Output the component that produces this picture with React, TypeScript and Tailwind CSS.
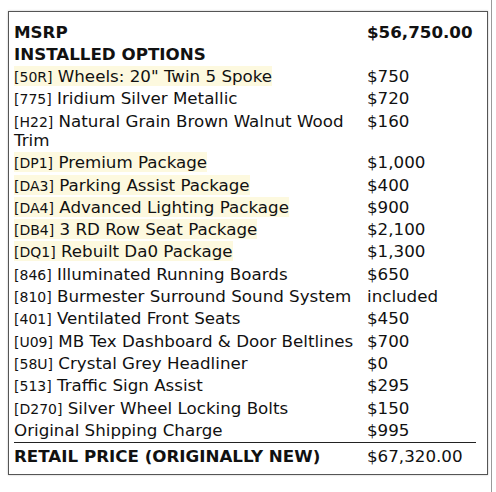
const options: { code: string; name: string; price: string; hl?: boolean }[] = [
  { code: '50R', name: 'Wheels: 20" Twin 5 Spoke', price: '$750', hl: true },
  { code: '775', name: 'Iridium Silver Metallic', price: '$720' },
  { code: 'H22', name: 'Natural Grain Brown Walnut Wood Trim', price: '$160' },
  { code: 'DP1', name: 'Premium Package', price: '$1,000', hl: true },
  { code: 'DA3', name: 'Parking Assist Package', price: '$400', hl: true },
  { code: 'DA4', name: 'Advanced Lighting Package', price: '$900', hl: true },
  { code: 'DB4', name: '3 RD Row Seat Package', price: '$2,100', hl: true },
  { code: 'DQ1', name: 'Rebuilt Da0 Package', price: '$1,300', hl: true },
  { code: '846', name: 'Illuminated Running Boards', price: '$650' },
  { code: '810', name: 'Burmester Surround Sound System', price: 'included' },
  { code: '401', name: 'Ventilated Front Seats', price: '$450' },
  { code: 'U09', name: 'MB Tex Dashboard & Door Beltlines', price: '$700' },
  { code: '58U', name: 'Crystal Grey Headliner', price: '$0' },
  { code: '513', name: 'Traffic Sign Assist', price: '$295' },
  { code: 'D270', name: 'Silver Wheel Locking Bolts', price: '$150' },
];

export default function App() {
  return (
    <div
      className="w-[492px] h-[492px] border-r border-[#9a9a9a] bg-white pt-[11px] pl-[8px] text-[#111]"
      style={{ fontFamily: '"DejaVu Sans", Verdana, sans-serif' }}
    >
      <div className="w-[480px] border border-[#555] shadow-[0_0_2px_rgba(0,0,0,0.25)] pt-[9px] pb-[7px] pl-[5px]">
        <table className="w-[462px] table-fixed border-collapse text-[16.7px] leading-[19.3px]">
          <colgroup>
            <col className="w-[353px]" />
            <col />
          </colgroup>
          <tbody>
            <tr>
              <td className="py-[1.5px] font-bold">MSRP</td>
              <td className="py-[1.5px] font-bold">$56,750.00</td>
            </tr>
            <tr>
              <td className="py-[1.5px] font-bold" colSpan={2}>
                INSTALLED OPTIONS
              </td>
            </tr>
            {options.map((o) => (
              <tr key={o.code}>
                <td className="py-[1.5px] pr-[6px] align-top">
                  <span className={o.hl ? 'bg-[#fdf9df]' : ''}>
                    <span className="text-[14px] leading-none">[{o.code}]</span> {o.name}
                  </span>
                </td>
                <td className="py-[1.5px] align-top">{o.price}</td>
              </tr>
            ))}
            <tr>
              <td className="py-[1.5px]">Original Shipping Charge</td>
              <td className="py-[1.5px]">$995</td>
            </tr>
            <tr className="border-t border-[#222]">
              <td className="pt-[4px] pb-[1.5px] font-bold">RETAIL PRICE (ORIGINALLY NEW)</td>
              <td className="pt-[4px] pb-[1.5px]">$67,320.00</td>
            </tr>
          </tbody>
        </table>
      </div>
    </div>
  );
}
